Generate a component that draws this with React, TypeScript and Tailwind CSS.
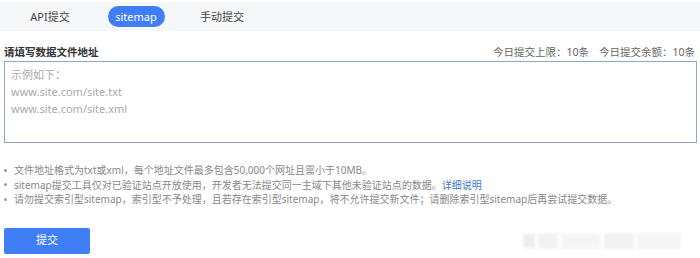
import * as React from "react"

const tabs = ["API提交", "sitemap", "手动提交"]

const tips: React.ReactNode[] = [
  "文件地址格式为txt或xml，每个地址文件最多包含50,000个网址且需小于10MB。",
  <>
    sitemap提交工具仅对已验证站点开放使用，开发者无法提交同一主域下其他未验证站点的数据。
    <span className="text-[#3a76d0]">详细说明</span>
  </>,
  "请勿提交索引型sitemap，索引型不予处理，且若存在索引型sitemap，将不允许提交新文件；请删除索引型sitemap后再尝试提交数据。",
]

export default function App() {
  const [active, setActive] = React.useState(1)

  return (
    <div
      className="w-[700px] h-[258px] bg-white overflow-hidden relative"
      style={{ fontFamily: '"Noto Sans", "Noto Sans CJK SC", sans-serif' }}
    >
      {/* Tabs */}
      <div className="mt-[2px] h-[29px] bg-[#f6f7f8] flex items-center pl-[7px]">
        {tabs.map((t, i) => (
          <div key={t} className="w-[86px] flex justify-center">
            <button
              onClick={() => setActive(i)}
              className={
                i === active
                  ? "h-[21px] w-[57px] rounded-full bg-[#3f7ef6] text-white text-[11px] leading-none"
                  : "h-[21px] w-[57px] text-[#444] text-[11px] leading-none"
              }
            >
              {t}
            </button>
          </div>
        ))}
      </div>

      {/* Header row */}
      <div className="mt-[14px] px-[4px] flex items-end justify-between">
        <span className="text-[10.5px] font-bold text-[#333] leading-[14px]">请填写数据文件地址</span>
        <span className="text-[10.5px] text-[#666] leading-[14px] flex gap-[10px] pr-[1px]">
          <span>今日提交上限：10条</span>
          <span>今日提交余额：10条</span>
        </span>
      </div>

      {/* Textarea */}
      <div className="mt-[2px] mx-[4px] w-[693px] h-[82px] border border-[#8fa9c4] px-[6px] pt-[4px] text-[11px] leading-[17px] text-[#aaa]">
        <div>示例如下：</div>
        <div>www.site.com/site.txt</div>
        <div>www.site.com/site.xml</div>
      </div>

      {/* Tips */}
      <ul className="mt-[20px] px-[4px] flex flex-col text-[10px] leading-[14.5px] text-[#888]">
        {tips.map((t, i) => (
          <li key={i} className="flex items-center">
            <span className="w-[3px] h-[3px] rounded-full bg-[#999] mr-[7px] shrink-0" />
            <span className="whitespace-nowrap">{t}</span>
          </li>
        ))}
      </ul>

      {/* Submit */}
      <div className="mt-[21px] px-[4px] flex items-center justify-between">
        <button className="w-[86px] h-[26px] rounded-[2px] bg-[#3f7ef6] text-white text-[11px]">提交</button>
        {/* faint watermark */}
        <div className="flex items-center gap-[3px] mr-[15px] blur-[1.5px] opacity-70">
          <div className="w-[12px] h-[14px] bg-[#e6e6e6]" />
          <div className="w-[20px] h-[16px] bg-[#ededed]" />
          <div className="w-[40px] h-[16px] bg-[#f2f2f2]" />
          <div className="w-[30px] h-[16px] bg-[#ebebeb]" />
          <div className="w-[44px] h-[16px] bg-[#f1f1f1]" />
        </div>
      </div>
    </div>
  )
}
